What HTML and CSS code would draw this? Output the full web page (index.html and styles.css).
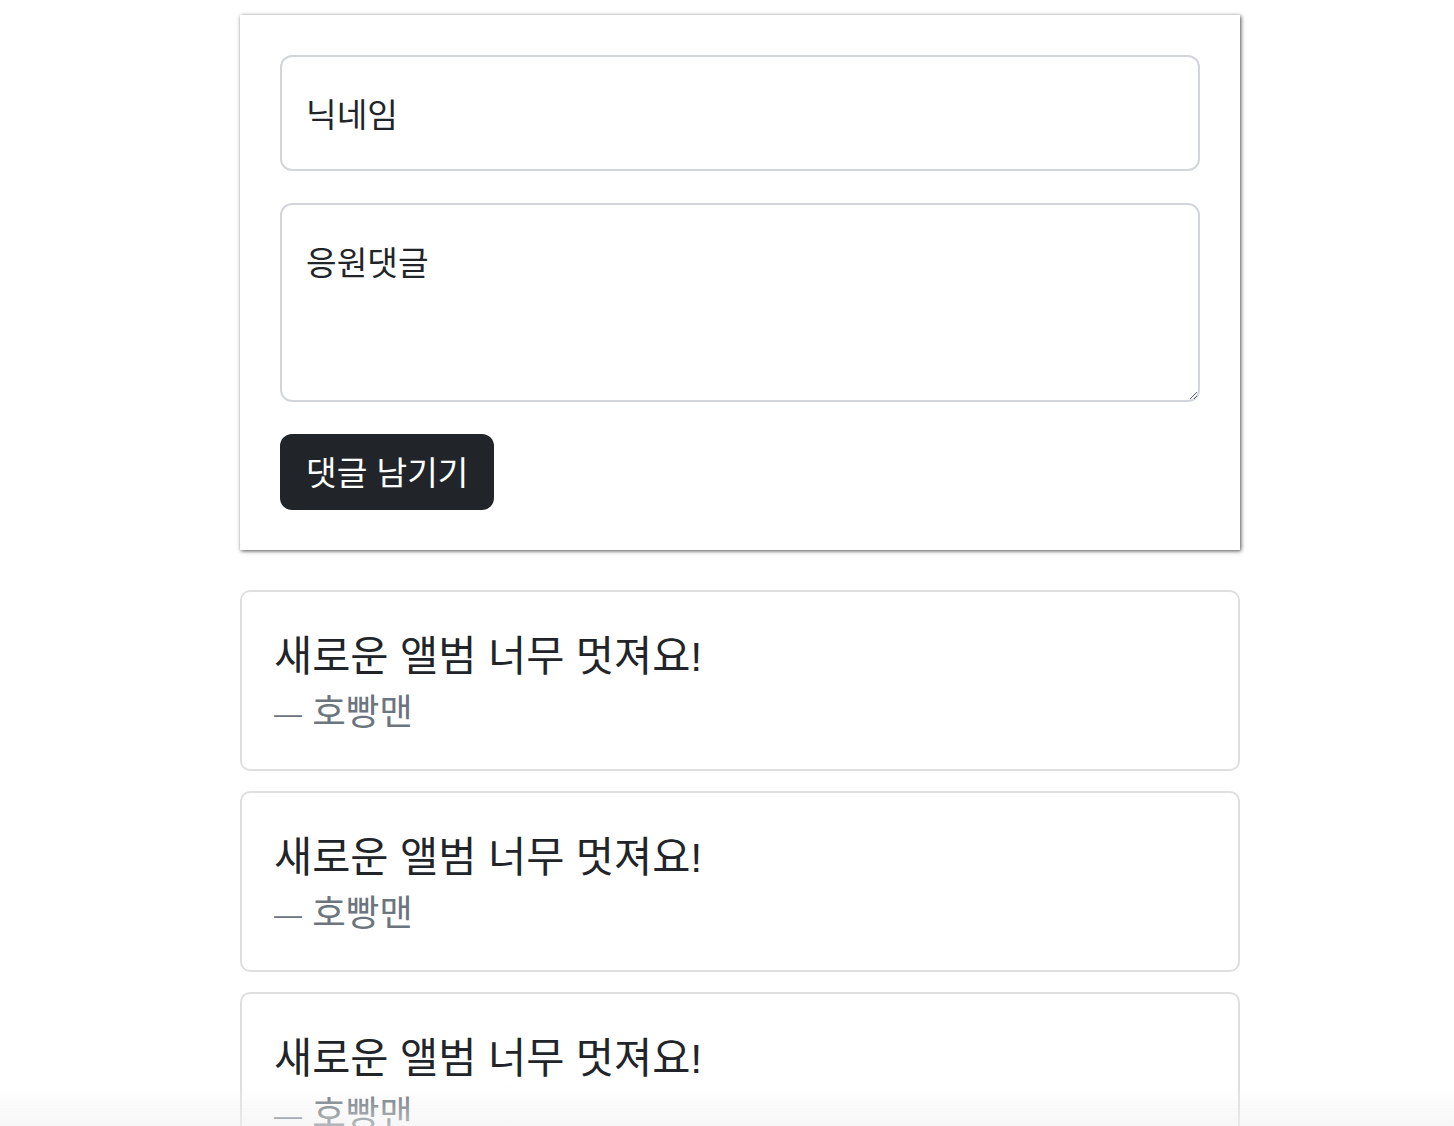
FILE: index.html
```html
<!DOCTYPE html>
<html lang="ko">
<head>
<meta charset="utf-8">
<title>응원댓글</title>
<link rel="stylesheet" href="styles.css">
</head>
<body>
<main class="page">
  <form class="form-card">
    <input class="field" type="text" placeholder="닉네임">
    <textarea class="field area" placeholder="응원댓글"></textarea>
    <button class="btn" type="button">댓글 남기기</button>
  </form>
  <section class="comments">
    <div class="comment">
      <p class="comment-text">새로운 앨범 너무 멋져요!</p>
      <p class="comment-author"><span class="dash">—</span> 호빵맨</p>
    </div>
    <div class="comment">
      <p class="comment-text">새로운 앨범 너무 멋져요!</p>
      <p class="comment-author"><span class="dash">—</span> 호빵맨</p>
    </div>
    <div class="comment">
      <p class="comment-text">새로운 앨범 너무 멋져요!</p>
      <p class="comment-author"><span class="dash">—</span> 호빵맨</p>
    </div>
  </section>
</main>
<div class="bottom-fade"></div>
</body>
</html>
```
FILE: styles.css
```css
html, body {
  margin: 0;
  padding: 0;
  background: #fff;
}
body {
  font-family: "Liberation Sans", "Noto Sans CJK KR", sans-serif;
  color: #212529;
}
.page {
  width: 1000px;
  margin: 15px 0 0 240px;
  padding-bottom: 40px;
}
.form-card {
  background: #fff;
  padding: 40px;
  box-shadow: 1px 1px 4px rgba(0, 0, 0, 0.7);
  display: flex;
  flex-direction: column;
  align-items: flex-start;
}
.field {
  box-sizing: border-box;
  width: 100%;
  border: 2px solid #d2d6db;
  border-radius: 12px;
  background: #fff;
  font-family: "Liberation Sans", "Noto Sans CJK KR", sans-serif;
  font-size: 33.3px;
  line-height: 48px;
  color: #212529;
  padding: 35px 24px 29px;
  margin: 0 0 32px 0;
  outline: none;
}
.field::placeholder {
  color: #212529;
  opacity: 1;
}
input.field {
  height: 116px;
}
.area {
  height: 199px;
  resize: vertical;
  display: block;
  padding-top: 35px;
}
.btn {
  background: #212529;
  color: #fff;
  border: none;
  border-radius: 12px;
  font-family: "Liberation Sans", "Noto Sans CJK KR", sans-serif;
  font-size: 33.3px;
  line-height: 48px;
  padding: 16px 26px 12px;
  cursor: pointer;
}
.comments {
  margin-top: 40px;
  display: flex;
  flex-direction: column;
  gap: 20px;
}
.comment {
  border: 2px solid #dfdfdf;
  border-radius: 10px;
  padding: 35px 32px 29px;
}
.comment-text {
  margin: 0;
  font-size: 41.5px;
  line-height: 60px;
  color: #212529;
}
.comment-author {
  margin: 0;
  font-size: 36.5px;
  line-height: 52px;
  color: #6c757d;
}
.dash {
  font-size: 28px;
  vertical-align: 2px;
}
.bottom-fade {
  position: fixed;
  left: 0;
  right: 0;
  bottom: 0;
  height: 42px;
  background: linear-gradient(to bottom, rgba(240, 240, 240, 0), rgba(240, 240, 240, 0.55));
  pointer-events: none;
}
```
